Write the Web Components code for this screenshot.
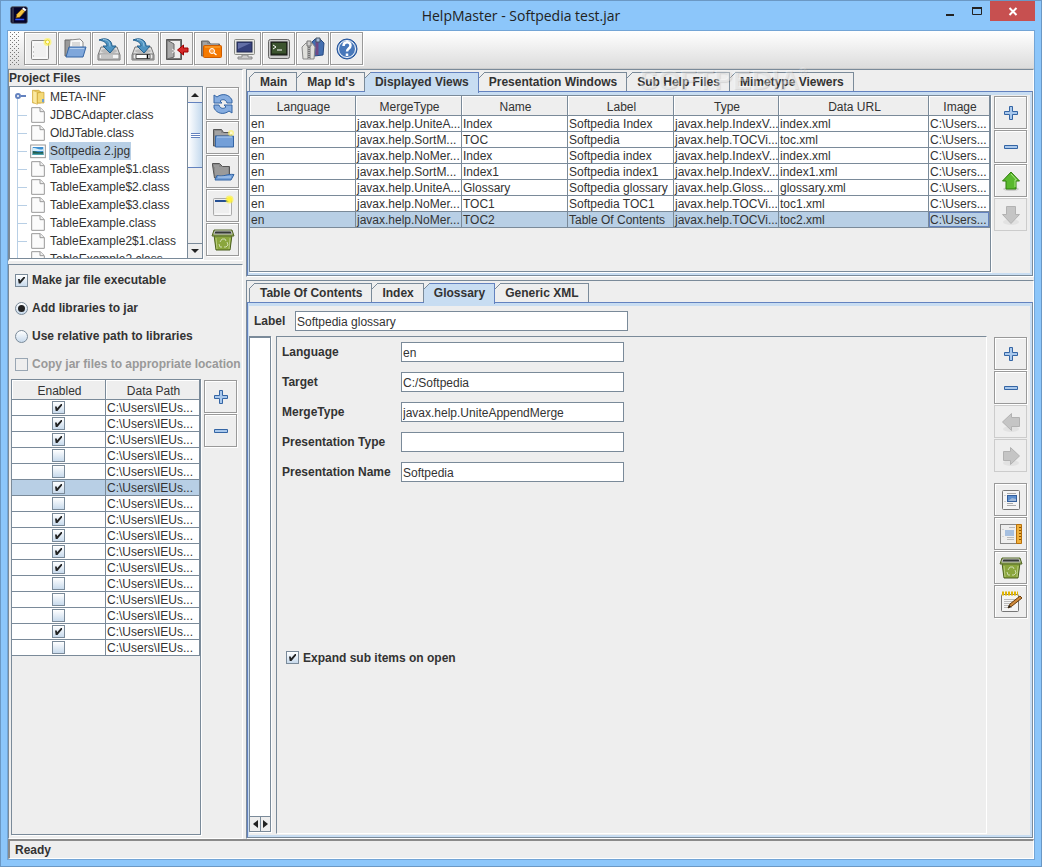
<!DOCTYPE html>
<html lang="en">
<head>
<meta charset="utf-8">
<title>HelpMaster - Softpedia test.jar</title>
<style>
  html, body { margin: 0; }
  body {
    --bg: #eeeeee; --line: #7a8a99; --accent: #6382bf; --select: #b8cfe5; --tab: #c8ddf2;
    font: 12px/16px "Liberation Sans", Arial, sans-serif; color: #333; background: #8cc6fa;
  }
</style>
</head>
<body>
<hm-app></hm-app>
<script>
const ICONS = {
  app: `<rect x="1" y="1" width="22" height="22" rx="2" fill="#04042c" stroke="#555"/><path d="M4 2v20" stroke="#777"/><path d="M8 16l1-5 7-7 4 3-7 8z" fill="#f5c542" stroke="#7a4a00"/><path d="M16 4l2-2 4 3-2 2z" fill="#fff"/><path d="M7 18h12" stroke="#35f" stroke-width="2"/>`,
  new: `<rect x="2.500" y="3.500" width="17" height="19" rx="1" fill="#f1f1f1" stroke="#888"/><path d="M4 5h14v16H4z" fill="none" stroke="#fff"/><path d="M4 10h1m-1 5h1m-1 4h1" stroke="#999"/><circle cx="18.500" cy="5" r="4" fill="#fff45a" opacity=".65"/><circle cx="18.500" cy="5" r="2" fill="#fffde0" stroke="#e8d520"/>`,
  open: `<path d="M2 19V3h7l2 3h7v13z" fill="#9a9a9a" stroke="#666"/><path d="M7 3l10-1 3 3v10H6z" fill="#f8f8f8" stroke="#888"/><path d="M9 6h8M9 8h8" stroke="#bbb"/><path d="M6 10h17l-3 10H3z" fill="#7fa7db" stroke="#3465a4"/><path d="M7 11.500h14" stroke="#b7d0ee"/>`,
  save: `<path d="M4 10h16l3 8v5H1v-5z" fill="#ddd" stroke="#777"/><path d="M2 17h20v5H2z" fill="#f4f4f4" stroke="#888"/><path d="M5 18v3m2-3v3m2-3v3m2-3v3m2-3v3m2-3v3" stroke="#999"/><ellipse cx="12" cy="14" rx="8" ry="2.500" fill="#bbb"/><path d="M2 3c7-3 13 0 13 6h4l-6 7-7-7h4c0-3-3-5-8-6z" fill="#4e94c2" stroke="#245f8c"/><path d="M6 2.500c5 0 7 3 7 7" fill="none" stroke="#9cc8e4"/>`,
  saveas: `<path d="M4 10h16l3 8v5H1v-5z" fill="#ddd" stroke="#777"/><path d="M2 17h20v5H2z" fill="#eee" stroke="#777"/><path d="M5 17.500h14v4H5z" fill="#fff" stroke="#555"/><path d="M16.500 17.500v4" stroke="#000" stroke-width="1.500"/><ellipse cx="12" cy="14" rx="8" ry="2" fill="#bbb"/><path d="M2 3c7-3 13 0 13 6h4l-6 7-7-7h4c0-3-3-5-8-6z" fill="#4e94c2" stroke="#245f8c"/><path d="M6 2.500c5 0 7 3 7 7" fill="none" stroke="#9cc8e4"/>`,
  exit: `<path d="M1.500 2.500h15v20h-15z" fill="#777" stroke="#555"/><path d="M5 4h10v17H5z" fill="#eee"/><path d="M2 3l7 4v13l-7 2z" fill="#aaa" stroke="#666"/><path d="M7 12l3 2-3 2" stroke="#eee" fill="none"/><path d="M12.500 13l6-5v3h4.500v4h-4.500v3z" fill="#d42a2a" stroke="#a00000"/>`,
  search: `<path d="M2.500 19V4h7l2 3h9v12z" fill="#888" stroke="#666"/><path d="M4 6h4M4 8h15" stroke="#bbb"/><rect x="4.500" y="8.500" width="18" height="12" rx="1" fill="#f57900" stroke="#ce5c00"/><path d="M6 10h15" stroke="#fcaf3e"/><circle cx="13" cy="14" r="2.500" fill="#f9a04a" stroke="#fff"/><path d="M15 16l2.500 2" stroke="#fff" stroke-width="1.500"/>`,
  monitor: `<rect x="1.500" y="2.500" width="20" height="15" rx="1" fill="#e5e5e0" stroke="#888a85"/><rect x="4" y="5" width="15" height="10" fill="#35407c" stroke="#20284f"/><path d="M5 6h13L5 12z" fill="#626ea6"/><path d="M9 18h6v2h4v2H5v-2h4z" fill="#ccc" stroke="#888"/>`,
  terminal: `<rect x="1.500" y="2.500" width="21" height="19" rx="2" fill="#ccc" stroke="#666"/><rect x="4" y="5" width="16" height="13" fill="#2c3f22" stroke="#111"/><path d="M5 7h14M5 9h14M5 11h14M5 13h14M5 15h14" stroke="#4d6a3c"/><path d="M6 8l3 2-3 2M10 13h5" fill="none" stroke="#fff"/>`,
  zip: `<path d="M11 5l3-3h5l4 4-1 12-9 1z" fill="#446fb0" stroke="#274a82"/><path d="M16 4v14" stroke="#704a84" stroke-width="3"/><path d="M15 1h4v4h-4z" fill="#a8bddb" stroke="#456"/><path d="M1 10l4-4h6l3 4-1 12H2z" fill="#e0e0dc" stroke="#888"/><path d="M8 9v13" stroke="#777" stroke-width="3"/><path d="M8 9v13" stroke="#ddd" stroke-dasharray="1 1"/><path d="M6 4h4v5H6z" fill="#ccc" stroke="#777"/>`,
  help: `<circle cx="12" cy="12" r="10" fill="#4878ba" stroke="#23539a"/><circle cx="12" cy="12" r="8.500" fill="none" stroke="#fff"/><path d="M8.500 9c0-5 7-5 7-.5 0 3-3.500 3-3.500 6M12 16.500V19" fill="none" stroke="#fff" stroke-width="2.500"/>`,
  refresh: `<path d="M3 11V3l3 2c5-4 12-3 15 3v3h-5c-1-4-5-4-7-2l2 2z" fill="#86ade0" stroke="#3465a4"/><path d="M21 13v8l-3-2c-5 4-12 3-15-3v-3h5c1 4 5 4 7 2l-2-2z" fill="#86ade0" stroke="#3465a4"/>`,
  foldernew: `<path d="M2.500 20V3.500h8l2 3h8V20z" fill="#8a8a8a" stroke="#555"/><path d="M4 6h6M4 8h15" stroke="#bbb"/><path d="M4.500 10h18v11h-18z" fill="#739fd8" stroke="#3465a4"/><path d="M6 11h15" stroke="#bad2ef"/><circle cx="20" cy="7" r="3" fill="#fcf16b" opacity=".7"/><circle cx="20" cy="7" r="1.500" fill="#fffbd0"/>`,
  folderopen: `<path d="M1.500 5V3.500h7l3 3h7V18H3.500z" fill="#8a8a8a" stroke="#555"/><path d="M3 6h5M4 8h13M4 10h13M4 12h13M4 14h13" stroke="#aaa"/><path d="M6 15.500c6 2 10-2 17-1l-3 5.500H4z" fill="#739fd8" stroke="#3465a4"/><path d="M7 17h13" stroke="#b9d1ee"/>`,
  window: `<rect x="2.500" y="4.500" width="18" height="17" rx="1" fill="#eee" stroke="#aaa"/><path d="M4 7h14" stroke="#244f92" stroke-width="2"/><path d="M4 20h15V9" fill="none" stroke="#fff"/><circle cx="18.500" cy="5.500" r="4" fill="#fff12b" opacity=".6"/><circle cx="18.500" cy="5.500" r="2.500" fill="#fff33a"/>`,
  trash: `<path d="M3 7h18l-2 15H5z" fill="#8aa63c" stroke="#4a5f1c"/><path d="M5 10l1 11m13-11l-1 11" stroke="#b9cd7e"/><path d="M3 2h18l2 6H1z" fill="#8fa552" stroke="#55682a"/><path d="M4 3h16l1 3H3z" fill="#353a34" stroke="#bbb"/><path d="M9 14l2-3h3l1 2M16 14l1 3-2 2h-2M11 19H9l-1-3" fill="none" stroke="#cfdcae"/>`,
  plus: `<path d="M10.500 5.500h3v5h5v3h-5v5h-3v-5h-5v-3h5z" fill="#a9c8ec" stroke="#3465a4"/>`,
  minus: `<path d="M5.500 10.500h13v3h-13z" fill="#a9c8ec" stroke="#3465a4"/>`,
  up: `<ellipse cx="12" cy="20" rx="8" ry="2" fill="#ccc"/><path d="M12 3l8.500 9H17v8H7v-8H3.500z" fill="#59b82d" stroke="#2f7d0a"/><path d="M12 5l5.500 6H16v7" fill="none" stroke="#a8e884"/>`,
  down: `<ellipse cx="12" cy="19" rx="8" ry="3" fill="#e2e2e2"/><path d="M7.500 3.500h9v8h4L12 20.500l-8.500-9h4z" fill="#c5c5c5" stroke="#b2b2b2"/>`,
  left: `<ellipse cx="12" cy="19" rx="8" ry="3" fill="#e2e2e2"/><path d="M3.500 12l9-8.500v4h8v9h-8v4z" fill="#c5c5c5" stroke="#b2b2b2"/>`,
  right: `<ellipse cx="12" cy="19" rx="8" ry="3" fill="#e2e2e2"/><path d="M20.500 12l-9-8.500v4h-7v9h7v4z" fill="#c5c5c5" stroke="#b2b2b2"/>`,
  page: `<rect x="3.500" y="2.500" width="17" height="19" rx="1" fill="#f5f5f5" stroke="#777"/><path d="M8 5.500h9M8 15.500h6M8 17.500h9M6 7v1m0 5v1" stroke="#aaa"/><rect x="8.500" y="7.500" width="9" height="6" fill="#5d8fcf" stroke="#345f9c"/><path d="M9 13l4-3 4 1v2z" fill="#9fb8d8"/>`,
  template: `<rect x="1.500" y="2.500" width="20" height="19" fill="#eee" stroke="#222" stroke-dasharray="1 1"/><path d="M10 5.500h6M8 15.500h7M8 17.500h7M4 7v1m0 6v1" stroke="#bbb"/><path d="M6 8h9v6H6z" fill="#a5bfe0"/><path d="M17.500 2.500h5v19h-5z" fill="#f0b03b" stroke="#b8700c"/><path d="M20 5.500h2m-2 3h2m-2 3h2m-2 3h2m-2 3h2" stroke="#8a5200"/>`,
  edit: `<rect x="2.500" y="4.500" width="17" height="17" rx="1" fill="#f5f5f5" stroke="#777"/><path d="M5 9.500h11M5 11.500h11M5 13.500h9M5 15.500h7M5 17.500h8" stroke="#bbb"/><path d="M3 3.500h16" stroke="#e0b400" stroke-width="4" stroke-dasharray="2 1"/><path d="M9 18l2-4 10-8 2 2-10 8z" fill="#cf8a3c" stroke="#6b3d0b"/><path d="M9 18l1-3 2 2z" fill="#222"/>`,
  folder: `<path d="M4 2h9l3 2v17H4z" fill="#e8c95e" stroke="#c79d2b"/><path d="M4 2l7 3v18l-7-3z" fill="#fbe9a0" stroke="#d6b043"/><path d="M15 5h6v16H11V6z" fill="#f4d978" stroke="#c79d2b"/><path d="M18 15h3v5h-3z" fill="#6aa0d8"/>`,
  file: `<path d="M2.500 1h13l6 6v16h-19z" fill="#fbfbfb" stroke="#999" stroke-width="1.500"/><path d="M15 1v6h6" fill="#eee" stroke="#999" stroke-width="1.500"/>`,
  image: `<rect x="1" y="3" width="22" height="19" fill="#fff" stroke="#999" stroke-width="1.500"/><path d="M4 6h16v12H4z" fill="#3d8fd0"/><path d="M4 8c5-2 9 4 16 1v3H4z" fill="#d5eefa"/><path d="M4 12c4 0 8 3 16 1v5H4z" fill="#245f4e"/><path d="M4 16h16v2H4z" fill="#49a3b0"/>`,
};

class Base extends HTMLElement {
  paint(css, html) {
    if (!this.shadowRoot) this.attachShadow({ mode: "open" });
    this.shadowRoot.innerHTML = `<style>*{box-sizing:border-box}${css}</style>${html}`;
  }
}

customElements.define("hm-icon", class extends Base {
  connectedCallback() {
    this.paint(`:host{display:block;width:24px;height:24px;flex:none} svg{display:block;width:100%;height:100%}`,
      `<svg viewBox="0 0 24 24" aria-hidden="true">${ICONS[this.getAttribute("name")]}</svg>`);
  }
});

customElements.define("hm-button", class extends Base {
  connectedCallback() {
    const off = this.hasAttribute("disabled");
    this.paint(`:host{display:block;flex:none}
      button{display:grid;place-items:center;width:33px;height:33px;padding:0;border:1px solid #999;background:var(--bg);
        box-shadow:inset 1px 1px #fff,1px 1px #fff}
      button:disabled{border-color:#ccc;box-shadow:none}`,
      `<button type="button" ${off ? "disabled" : ""} aria-label="${this.getAttribute("label")}"><hm-icon name="${this.getAttribute("icon")}"></hm-icon></button>`);
  }
});

customElements.define("hm-button-stack", class extends Base {
  connectedCallback() {
    this.paint(`:host{display:flex;flex-direction:column;gap:1px;padding-top:1px;flex:none}`, `<slot></slot>`);
  }
});

customElements.define("hm-toolbar", class extends Base {
  connectedCallback() {
    this.paint(`:host{display:flex;gap:1px;height:38px;padding:1px 2px;border-bottom:1px solid #ccc;background:linear-gradient(#fff,#dcdcdc)}
      .grip{width:10px;margin-right:3px;background:conic-gradient(#999 25%,transparent 0) -1px 1px/4px 4px,conic-gradient(#999 25%,transparent 0) 1px 3px/4px 4px;
        background:linear-gradient(#8a8a8a,#8a8a8a) 0 0/1px 1px;background:none}
      svg{display:block;width:10px;height:34px}`,
      `<div class="grip"><svg aria-hidden="true"><defs><pattern id="dots" width="4" height="4" patternUnits="userSpaceOnUse"><path d="M0 0h1v1H0zM2 2h1v1H2z" fill="#777"/></pattern></defs><rect width="10" height="34" fill="url(#dots)"/></svg></div><slot></slot>`
    );
  }
});

const MARK = `content:"";position:absolute;`;
const CHECK_CSS = `
  input{appearance:none;position:relative;flex:none;width:13px;height:13px;margin:0;border:1px solid var(--line);
    background:linear-gradient(#fff,#c8daec)}
  input[type=radio]{border-radius:50%}
  input:disabled{background:none;border-color:#99a6b3}
  input[type=checkbox]:checked::before{${MARK}inset:2px;background:#222;clip-path:polygon(0 35%,25% 35%,30% 60%,85% 0,100% 0,100% 20%,35% 100%,10% 100%)}
  input[type=radio]:checked::before{${MARK}inset:2px;border-radius:50%;background:#222}`;

customElements.define("hm-check", class extends Base {
  connectedCallback() {
    const type = this.getAttribute("type") || "checkbox";
    this.paint(`:host{display:block;font-weight:bold}
      label{display:flex;align-items:center;gap:4px;white-space:nowrap} :host([disabled]) label{color:#999} ${CHECK_CSS}`,
      `<label><input type="${type}" ${this.hasAttribute("checked") ? "checked" : ""} ${this.hasAttribute("disabled") ? "disabled" : ""}><slot></slot></label>`);
  }
});

customElements.define("hm-field", class extends Base {
  connectedCallback() {
    this.paint(`:host{display:flex;align-items:center}
      label{flex:none;width:var(--label-width,41px);font-weight:bold;white-space:nowrap}
      input{width:var(--field-width,223px);height:20px;padding:2px 1px 0;border:1px solid var(--line);background:#fff;font:inherit;color:inherit;border-radius:0;min-width:0}`,
      `<label for="f">${this.getAttribute("label")}</label><input id="f" type="text" value="${this.getAttribute("value")}">`);
  }
});

customElements.define("hm-tabs", class extends Base {
  connectedCallback() {
    const cur = this.getAttribute("selected");
    const tabs = this.getAttribute("tabs").split("|").map(t =>
      `<button type="button" role="tab" aria-selected="${t === cur}">${t}</button>`).join("");
    this.paint(`:host{display:flex;flex-direction:column;min-height:0;min-width:0;border:1px solid;border-color:var(--line) #fff #fff var(--line)}
      .bar{display:flex;position:relative;padding:2px 2px 0}
      button{position:relative;height:19px;padding:0 9px 0 10px;border:1px solid var(--line);border-width:1px 1px 0 0;background:var(--bg);font:bold 12px/16px "Liberation Sans",Arial,sans-serif;color:inherit;white-space:nowrap}
      button:first-child{border-left-width:1px}
      button::before{content:"";position:absolute;left:0;top:-1px;width:6px;height:6px;background:linear-gradient(135deg,var(--bg) 44%,var(--line) 45% 56%,transparent 57%)}
      button:first-child::before{left:-1px}
      button[aria-selected=true]{z-index:1;height:21px;margin-bottom:-2px;padding-bottom:2px;background:var(--tab);border-color:var(--accent)}
      .body{flex:1;display:flex;min-height:0;border:1px solid;border-color:var(--accent) var(--line) var(--line) var(--accent)}
      .inner{flex:1;display:flex;flex-direction:column;min-width:0;border:solid var(--tab);border-width:3px 2px 2px 1px;padding:0 3px 1px 0}`,
      `<div class="bar" role="tablist">${tabs}<slot name="over"></slot></div><div class="body"><div class="inner"><slot></slot></div></div>`);
  }
});

customElements.define("hm-watermark", class extends Base {
  connectedCallback() {
    this.paint(`:host{position:absolute;z-index:2;left:392px;top:-3px;pointer-events:none;font:bold 28px/26px "Liberation Sans",Arial,sans-serif;color:rgba(255,255,255,.4);text-shadow:1px 1px 1px rgba(0,0,0,.1)}
      sup{font:10px/10px "Liberation Sans",Arial,sans-serif;vertical-align:top}`, `SOFTPEDIA<sup>®</sup>`);
  }
});

customElements.define("hm-table", class extends Base {
  connectedCallback() {
    const split = s => s.split("|");
    const cols = split(this.getAttribute("columns")), widths = split(this.getAttribute("widths"));
    const picked = +this.getAttribute("selected");
    const rows = this.textContent.trim().split("\n").map(r => split(r.trim()));
    const cell = (v, i) => v === "[x]" || v === "[ ]"
      ? `<td class="tick"><input type="checkbox" aria-label="Enabled, row ${i + 1}" ${v === "[x]" ? "checked" : ""}></td>` : `<td>${v}</td>`;
    this.paint(`:host{display:block;min-width:0;overflow:hidden;border:1px solid var(--line);box-shadow:1px 1px #fff}
      table{width:100%;table-layout:fixed;border-collapse:separate;border-spacing:0}
      th,td{padding:0 1px;border:solid var(--line);border-width:0 1px 1px 0;overflow:hidden;white-space:nowrap;font-weight:normal}
      th{height:20px;padding:4px 1px 0 3px;line-height:15px;text-align:center;box-shadow:inset 1px 1px #fff}
      td{height:16px;padding-top:2px;line-height:13px;background:#fff;text-align:left}
      tr.sel td{background:var(--select)}
      .focus tr.sel td:last-child{box-shadow:inset 0 0 0 1px var(--accent)}
      .tick{padding:0;text-align:center;line-height:0;font-size:0} ${CHECK_CSS} .tick input{vertical-align:top}`,
      `<table class="${this.hasAttribute("focus") ? "focus" : ""}"><colgroup>${widths.map(w => `<col style="width:${w}">`).join("")}</colgroup>
       <thead><tr>${cols.map(c => `<th scope="col">${c}</th>`).join("")}</tr></thead>
       <tbody>${rows.map((r, i) => `<tr class="${i + 1 === picked ? "sel" : ""}">${r.map(v => cell(v, i)).join("")}</tr>`).join("")}</tbody></table>`);
  }
});

customElements.define("hm-tree", class extends Base {
  connectedCallback() {
    const items = this.textContent.trim().split("\n").map(l => l.trim().split("|"));
    this.paint(`:host{display:flex;width:194px;height:173px;overflow:hidden;border:1px solid var(--line);background:#fff;box-shadow:1px 1px #fff}
      ul{flex:1;min-width:0;margin:0;padding:1px 0 0 7px;list-style:none;overflow:hidden}
      li{display:flex;align-items:center;height:18px;white-space:nowrap;background:linear-gradient(#b8cfe5,#b8cfe5) 0 0/1px 100% no-repeat,linear-gradient(#b8cfe5,#b8cfe5) 0 9px/10px 1px no-repeat}
      li.root{background-size:1px 9px,0 0;background-position:0 9px,0 0}
      .knob{width:13px;height:18px;flex:none;position:relative}
      .root .knob::before{content:"";position:absolute;left:-2px;top:5px;width:2px;height:2px;border:2px solid var(--accent);border-radius:50%;background:#fff}
      .root .knob::after{content:"";position:absolute;left:4px;top:7px;width:5px;height:2px;background:var(--accent)}
      hm-icon{width:16px;height:16px;margin-right:3px}
      span{padding:0 1px;line-height:18px} .sel span{background:var(--select)}
      .scroll{display:flex;flex-direction:column;width:15px;border-left:1px solid var(--line)}
      .arrow{height:15px;display:grid;place-items:center;background:var(--bg)}
      .arrow::before{content:"";border:4px solid transparent;border-top-width:0;border-bottom-color:#222}
      .arrow.dn::before{transform:rotate(180deg)} .arrow.dn{border-top:1px solid var(--line)}
      .track{flex:1;background:var(--bg)}
      .thumb{display:grid;place-items:center;height:66px;border:1px solid var(--accent);border-width:1px 0;background:linear-gradient(90deg,#fff,#c4d9ee)}
      .thumb::before{content:"";width:9px;height:5px;background:repeating-linear-gradient(var(--accent) 0 1px,#fff 1px 2px)}`,
      `<ul>${items.map(([ic, t, s]) => `<li class="${ic === "folder" ? "root" : ""} ${s ? "sel" : ""}"><i class="knob"></i><hm-icon name="${ic}"></hm-icon><span>${t}</span></li>`).join("")}</ul>
       <div class="scroll"><div class="arrow"></div><div class="track"><div class="thumb"></div></div><div class="arrow dn"></div></div>`);
  }
});

customElements.define("hm-panel", class extends Base {
  connectedCallback() {
    this.paint(`:host{display:flex;flex-direction:column;min-width:0;min-height:0;border:1px solid;border-color:var(--line) #fff #fff var(--line)}`, `<slot></slot>`);
  }
});

customElements.define("hm-list-pane", class extends Base {
  connectedCallback() {
    this.paint(`:host{display:flex;flex-direction:column;width:22px;flex:none;margin-bottom:2px;border:solid var(--line);border-width:2px 1px 1px;background:#fff;box-shadow:1px 1px #fff}
      .list{flex:1} .bar{display:grid;grid-template-columns:1fr 1fr;height:15px;border-top:1px solid var(--line)}
      i{display:grid;place-items:center;background:var(--bg)} i+i{border-left:1px solid var(--line)}
      i::before{content:"";border:4px solid transparent;border-left-width:0;border-right:5px solid #222} i+i::before{transform:rotate(180deg)}`,
      `<div class="list"></div><div class="bar"><i></i><i></i></div>`);
  }
});

customElements.define("hm-window", class extends Base {
  connectedCallback() {
    this.paint(`:host{display:flex;flex-direction:column;min-height:100vh;box-sizing:border-box;border:1px solid #6b98c4;padding:0 6px 6px;background:#8cc6fa}
      header{display:grid;grid-template-columns:1fr auto 1fr;height:29px;flex:none}
      .logo{padding:5px 0 0 3px} .logo hm-icon{width:18px;height:18px}
      h1{margin:0;font:14px/29px "Open Sans","Noto Sans",sans-serif;color:#222}
      .ctl{display:flex;justify-content:flex-end}
      .ctl button{display:grid;place-items:center;padding:0;border:0;height:20px;width:27px;background:none}
      .ctl .x{width:45px;background:#c75050} svg{display:block}
      main{flex:1;display:flex;flex-direction:column;border:1px solid #73a5d6;background:var(--bg)}`,
      `<header><div class="logo"><hm-icon name="app"></hm-icon></div><h1>${this.getAttribute("heading")}</h1>
       <div class="ctl"><button type="button" aria-label="Minimize"><svg width="10" height="10"><path d="M1 9h8" stroke="#222" stroke-width="2"/></svg></button>
       <button type="button" aria-label="Maximize"><svg width="10" height="10"><path d="M.5 1.500h9v7h-9z" fill="none" stroke="#222"/><path d="M0 2h10" stroke="#222" stroke-width="2"/></svg></button>
       <button type="button" class="x" aria-label="Close"><svg width="10" height="10"><path d="M1.500 2l7 7m0-7l-7 7" stroke="#fff" stroke-width="2"/></svg></button></div></header>
       <main><slot></slot></main>`);
  }
});

customElements.define("hm-status", class extends Base {
  connectedCallback() {
    this.paint(`:host{display:block;height:20px;padding:1px 5px;font-weight:bold;border:solid;border-width:2px 1px 1px 2px;border-color:#8a8a8a #fff #fff #8a8a8a}`, `<slot></slot>`);
  }
});

customElements.define("hm-app", class extends Base {
  connectedCallback() {
    this.paint(`:host{display:block}
      .split{flex:1;display:grid;grid-template-columns:235px minmax(0,1fr);gap:3px}
      .col{display:grid;gap:3px;min-height:0}
      .left{grid-template-rows:192px 1fr} .right{grid-template-rows:208px 1fr}
      h2{margin:0;font:bold 12px/16px "Liberation Sans",Arial,sans-serif}
      .row{display:flex;gap:3px}
      .grow{flex:1;min-height:0;min-width:0}
      .options{display:grid;grid-auto-rows:28px;align-items:center;padding:1px 0 1px 6px}
      .libs{padding:0 0 3px 2px} .libs hm-table{width:190px}
      .label{padding:5px 0 5px 5px;--field-width:333px}
      .editor{gap:7px} .editor hm-list-pane{margin-right:-2px}
      .form{flex:1;padding:5px 5px 0;--label-width:119px}
      .fields{display:grid;gap:10px} .expand{margin:auto auto auto 4px}
      .gap{height:9px}`,
    `<hm-window heading="HelpMaster - Softpedia test.jar">
      <hm-toolbar>
        <hm-button icon="new" label="New"></hm-button><hm-button icon="open" label="Open"></hm-button>
        <hm-button icon="save" label="Save"></hm-button><hm-button icon="saveas" label="Save as"></hm-button>
        <hm-button icon="exit" label="Exit"></hm-button><hm-button icon="search" label="Search"></hm-button>
        <hm-button icon="monitor" label="Preview"></hm-button><hm-button icon="terminal" label="Console"></hm-button>
        <hm-button icon="zip" label="Package"></hm-button><hm-button icon="help" label="Help"></hm-button>
      </hm-toolbar>
      <div class="split">
        <div class="col left">
          <hm-panel>
            <h2>Project Files</h2>
            <div class="row">
              <hm-tree>folder|META-INF
                file|JDBCAdapter.class
                file|OldJTable.class
                image|Softpedia 2.jpg|selected
                file|TableExample$1.class
                file|TableExample$2.class
                file|TableExample$3.class
                file|TableExample.class
                file|TableExample2$1.class
                file|TableExample2.class</hm-tree>
              <hm-button-stack>
                <hm-button icon="refresh" label="Refresh"></hm-button><hm-button icon="foldernew" label="New folder"></hm-button>
                <hm-button icon="folderopen" label="Add folder"></hm-button><hm-button icon="window" label="New file"></hm-button>
                <hm-button icon="trash" label="Delete"></hm-button>
              </hm-button-stack>
            </div>
          </hm-panel>
          <hm-panel>
            <div class="options">
              <hm-check checked>Make jar file executable</hm-check>
              <hm-check type="radio" checked>Add libraries to jar</hm-check>
              <hm-check type="radio">Use relative path to libraries</hm-check>
              <hm-check disabled>Copy jar files to appropriate location</hm-check>
            </div>
            <div class="row grow libs">
              <hm-table columns="Enabled|Data Path" widths="94px|auto" selected="6">
                ${[1,1,1,0,0,1,0,1,1,1,1,0,0,0,1,0].map(c => `[${c ? "x" : " "}]|C:\\Users\\IEUs...`).join("\n")}
              </hm-table>
              <hm-button-stack><hm-button icon="plus" label="Add library"></hm-button><hm-button icon="minus" label="Remove library"></hm-button></hm-button-stack>
            </div>
          </hm-panel>
        </div>
        <div class="col right">
          <hm-tabs tabs="Main|Map Id's|Displayed Views|Presentation Windows|Sub Help Files|Mimetype Viewers" selected="Displayed Views">
            <hm-watermark slot="over"></hm-watermark>
            <div class="row grow">
              <hm-table class="grow" focus columns="Language|MergeType|Name|Label|Type|Data URL|Image" widths="106px|106px|106px|106px|105px|auto|61px" selected="7">
                en|javax.help.UniteA...|Index|Softpedia Index|javax.help.IndexV...|index.xml|C:\\Users...
                en|javax.help.SortM...|TOC|Softpedia|javax.help.TOCVi...|toc.xml|C:\\Users...
                en|javax.help.NoMer...|Index|Softpedia index|javax.help.IndexV...|index.xml|C:\\Users...
                en|javax.help.SortM...|Index1|Softpedia index1|javax.help.IndexV...|index1.xml|C:\\Users...
                en|javax.help.UniteA...|Glossary|Softpedia glossary|javax.help.Gloss...|glossary.xml|C:\\Users...
                en|javax.help.NoMer...|TOC1|Softpedia TOC1|javax.help.TOCVi...|toc1.xml|C:\\Users...
                en|javax.help.NoMer...|TOC2|Table Of Contents|javax.help.TOCVi...|toc2.xml|C:\\Users...
              </hm-table>
              <hm-button-stack>
                <hm-button icon="plus" label="Add view"></hm-button><hm-button icon="minus" label="Remove view"></hm-button>
                <hm-button icon="up" label="Move up"></hm-button><hm-button icon="down" label="Move down" disabled></hm-button>
              </hm-button-stack>
            </div>
          </hm-tabs>
          <hm-tabs tabs="Table Of Contents|Index|Glossary|Generic XML" selected="Glossary">
            <hm-field class="label" label="Label" value="Softpedia glossary"></hm-field>
            <div class="row grow editor">
              <hm-list-pane></hm-list-pane>
              <hm-panel class="form">
                <div class="fields">
                  <hm-field label="Language" value="en"></hm-field>
                  <hm-field label="Target" value="C:/Softpedia"></hm-field>
                  <hm-field label="MergeType" value="javax.help.UniteAppendMerge"></hm-field>
                  <hm-field label="Presentation Type" value=""></hm-field>
                  <hm-field label="Presentation Name" value="Softpedia"></hm-field>
                </div>
                <hm-check class="expand" checked>Expand sub items on open</hm-check>
              </hm-panel>
              <hm-button-stack>
                <hm-button icon="plus" label="Add item"></hm-button><hm-button icon="minus" label="Remove item"></hm-button>
                <hm-button icon="left" label="Outdent" disabled></hm-button><hm-button icon="right" label="Indent" disabled></hm-button>
                <div class="gap"></div>
                <hm-button icon="page" label="Page"></hm-button><hm-button icon="template" label="Template"></hm-button>
                <hm-button icon="trash" label="Delete item"></hm-button><hm-button icon="edit" label="Edit item"></hm-button>
              </hm-button-stack>
            </div>
          </hm-tabs>
        </div>
      </div>
      <hm-status>Ready</hm-status>
    </hm-window>`);
  }
});
</script>
</body>
</html>
